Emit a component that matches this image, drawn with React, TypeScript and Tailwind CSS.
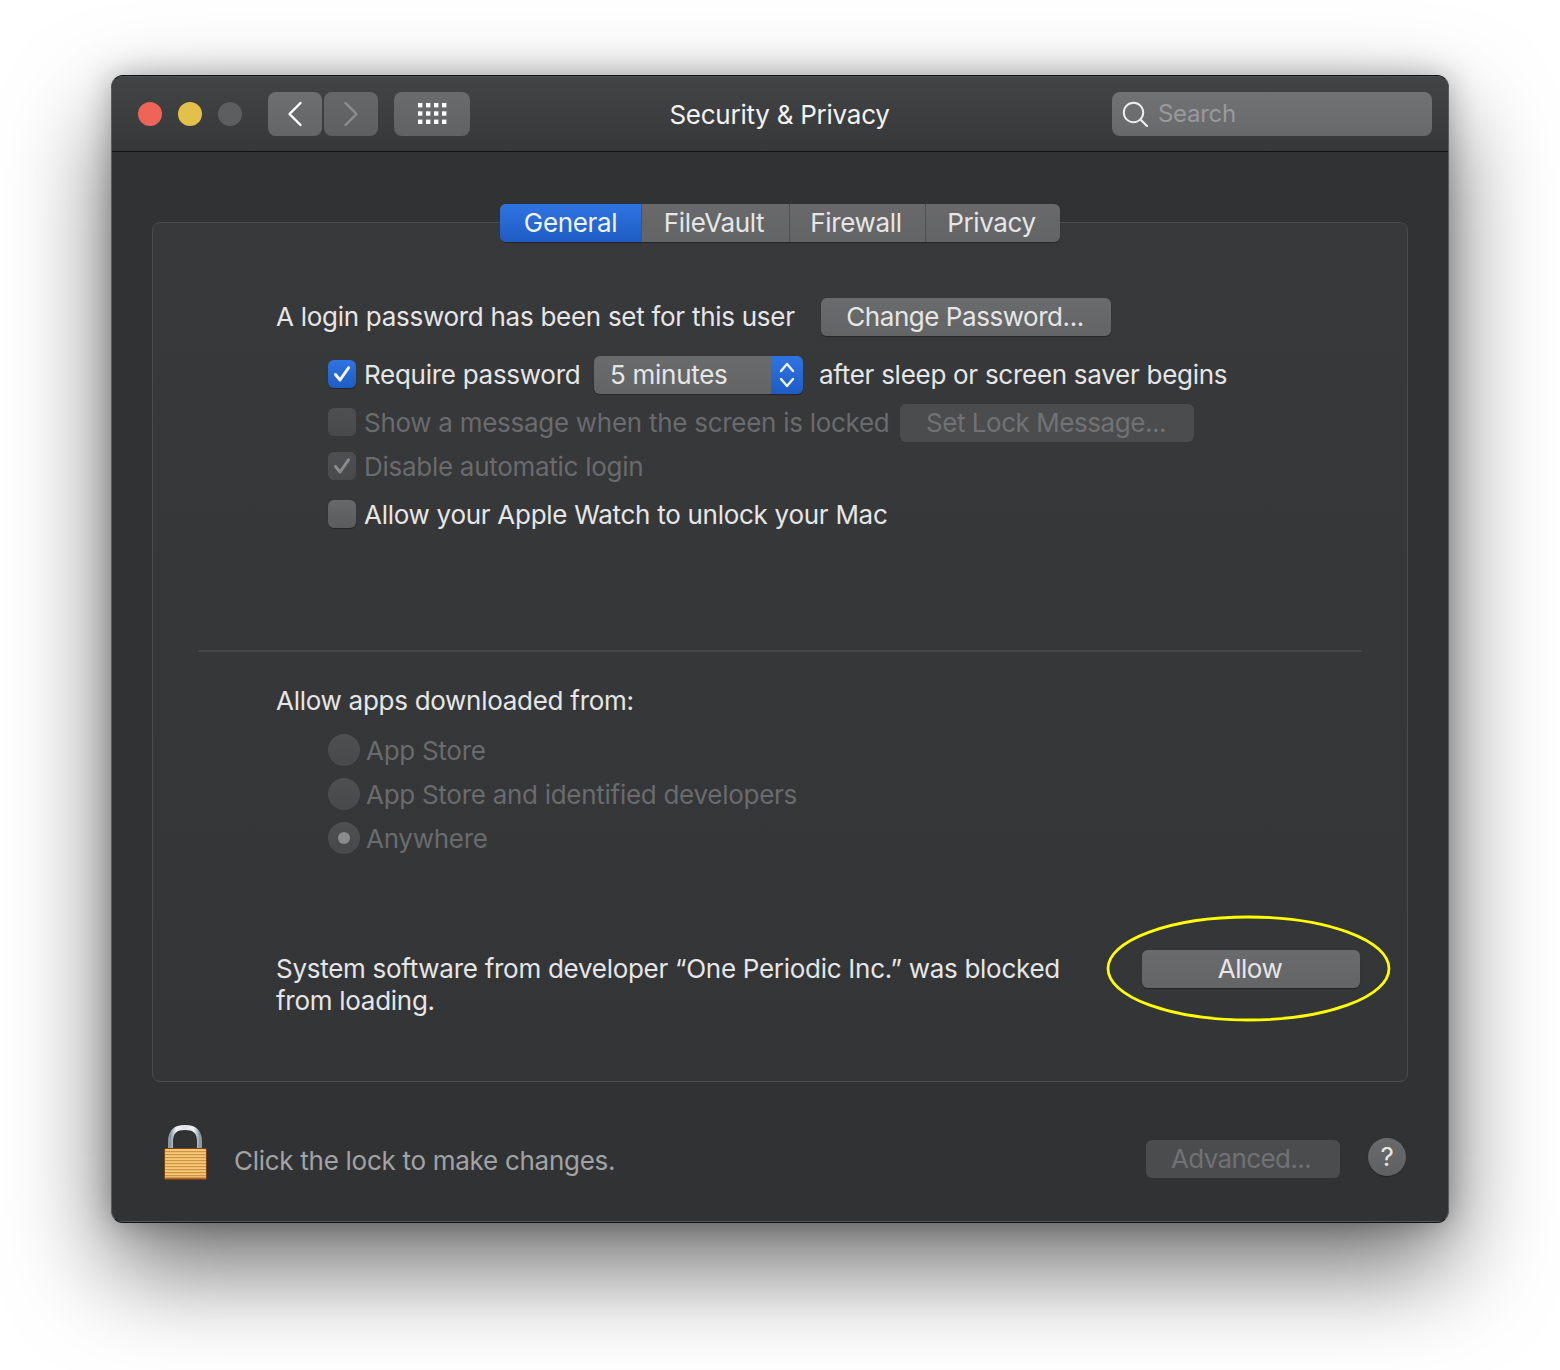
import React from "react";

const font = { fontFamily: "Inter, 'Liberation Sans', sans-serif" };

function Check({ dim }: { dim?: boolean }) {
  return (
    <svg width="20" height="20" viewBox="0 0 20 20" fill="none">
      <path d="M3.5 10.5 L8 16 L16.5 3.8" stroke={dim ? "#8a8b8c" : "#f2f4f8"} strokeWidth="3" strokeLinecap="round" strokeLinejoin="round" />
    </svg>
  );
}

function Box({ kind }: { kind: "on" | "off" | "dim" | "dimcheck" }) {
  const cls =
    kind === "on"
      ? "bg-gradient-to-b from-[#2f74e3] to-[#1f5cc4] shadow-[0_1px_1px_rgba(0,0,0,0.35)]"
      : kind === "off"
        ? "bg-gradient-to-b from-[#67686a] to-[#5a5b5d] shadow-[0_1px_1px_rgba(0,0,0,0.35)]"
        : "bg-gradient-to-b from-[#4e4f51] to-[#484a4c]";
  return (
    <span className={`flex items-center justify-center w-[28px] h-[28px] mb-[2px] rounded-[6px] shrink-0 ${cls}`}>
      {kind === "on" && <Check />}
      {kind === "dimcheck" && <Check dim />}
    </span>
  );
}

function Btn({ w, children, dim, track = "tracking-[-0.45px]", pad = "" }: { w: string; children: React.ReactNode; dim?: boolean; track?: string; pad?: string }) {
  return (
    <div
      className={`${w} ${track} ${pad} h-[38px] flex items-center justify-center rounded-[6px] shrink-0 ${
        dim
          ? "bg-[#4b4c4e] text-[#717274]"
          : "bg-gradient-to-b from-[#6a6b6d] to-[#636466] text-[#e6e6e7] shadow-[0_1px_1px_rgba(0,0,0,0.35)]"
      }`}
    >
      {children}
    </div>
  );
}

function Radio({ dot }: { dot?: boolean }) {
  return (
    <span className="flex items-center justify-center w-[32px] h-[32px] mb-[2px] rounded-full shrink-0 bg-gradient-to-b from-[#4e4f51] to-[#48494b]">
      {dot && <span className="w-[12px] h-[12px] rounded-full bg-[#8a8b8c]" />}
    </span>
  );
}

function Lock() {
  return (
    <svg width="44" height="56" viewBox="0 0 44 56" className="shrink-0">
      <defs>
        <linearGradient id="sh" x1="0" x2="1" y1="0" y2="0">
          <stop offset="0" stopColor="#8d98a3" />
          <stop offset="0.2" stopColor="#f2f5f8" />
          <stop offset="0.5" stopColor="#dfe3e7" />
          <stop offset="0.8" stopColor="#f2f5f8" />
          <stop offset="1" stopColor="#8d98a3" />
        </linearGradient>
      </defs>
      <path d="M6.5 24 V16.5 C6.5 6 12 2.5 21 2.5 C30 2.5 35.5 6 35.5 16.5 V24" fill="none" stroke="url(#sh)" strokeWidth="5" />
      <rect x="0.5" y="23.5" width="42" height="31" rx="1.5" fill="#f5c77a" stroke="#7d4214" strokeWidth="1" />
      {[26, 29, 32, 35, 38, 41, 44, 47, 50].map((y) => (
        <rect key={y} x="1" y={y} width="41" height="1.2" fill="#cf9440" />
      ))}
      <rect x="1" y="52.5" width="41" height="1.5" fill="#a9682a" />
    </svg>
  );
}

function Tab({ w, label, active }: { w: string; label: string; active?: boolean }) {
  return (
    <div
      className={`${w} h-full flex items-center justify-center tracking-[-0.35px] ${
        active
          ? "bg-gradient-to-b from-[#2f74e3] to-[#1f5cc4] text-[#f0f4fb] pl-[1px]"
          : "border-l border-[#505153] first:border-l-0 text-[#e6e6e7] pr-[2px]"
      }`}
    >
      {label}
    </div>
  );
}

export default function App() {
  return (
    <div style={font} className="w-[1560px] h-[1370px] bg-white pt-[75px] pl-[111px] text-[26px] tracking-[-0.28px] leading-[32px]">
      <div className="w-[1338px] h-[1148px] rounded-[12px] border border-x-[#5a5b5d] border-y-[#111112] bg-[#313234] overflow-hidden shadow-[0_44px_100px_0_rgba(0,0,0,0.58),0_0_30px_rgba(0,0,0,0.28)]">
        <div className="h-full border-b border-[#56575a]">
          <div className="relative h-[75px] flex items-center bg-gradient-to-b from-[#434446] to-[#37383a] shadow-[inset_0_1px_0_#505153] border-b border-[#111112] box-content pl-[26px] pr-[16px]">
            <span className="w-[24px] h-[24px] rounded-full bg-[#ee6459]" />
            <span className="w-[24px] h-[24px] rounded-full bg-[#e2c04a] ml-[16px]" />
            <span className="w-[24px] h-[24px] rounded-full bg-[#5d5e60] ml-[16px]" />
            <div className="w-[54px] h-[44px] ml-[26px] rounded-[8px] bg-gradient-to-b from-[#6e6f71] to-[#646567] flex items-center justify-center">
              <svg width="18" height="26" viewBox="0 0 18 26" fill="none">
                <path d="M14.5 2 L3.5 13 L14.5 24" stroke="#ffffff" strokeWidth="2.4" strokeLinecap="round" strokeLinejoin="round" />
              </svg>
            </div>
            <div className="w-[54px] h-[44px] ml-[2px] rounded-[8px] bg-gradient-to-b from-[#666769] to-[#5e5f61] flex items-center justify-center">
              <svg width="18" height="26" viewBox="0 0 18 26" fill="none">
                <path d="M3.5 2 L14.5 13 L3.5 24" stroke="#8c8d8f" strokeWidth="2.4" strokeLinecap="round" strokeLinejoin="round" />
              </svg>
            </div>
            <div className="w-[76px] h-[44px] ml-[16px] rounded-[8px] bg-gradient-to-b from-[#6a6b6d] to-[#616264] flex items-center justify-center">
              <svg width="29" height="21" viewBox="0 0 29 21" fill="#ffffff">
                {[0, 8.3, 16.6].map((y) =>
                  [0, 8, 16, 24].map((x) => <rect key={`${x}-${y}`} x={x} y={y} width="4.4" height="4.4" />)
                )}
              </svg>
            </div>
            <div className="absolute inset-x-0 top-[1px] h-[75px] flex items-center justify-center text-[#f2f2f3] pointer-events-none -ml-[1px] tracking-[-0.25px]">
              Security &amp; Privacy
            </div>
            <div className="ml-auto w-[320px] h-[44px] rounded-[8px] bg-gradient-to-b from-[#717274] to-[#68696b] flex items-center pl-[10px]">
              <svg width="26" height="26" viewBox="0 0 26 26" fill="none">
                <circle cx="11.5" cy="11.5" r="9.7" stroke="#eeeeee" strokeWidth="2" />
                <path d="M18.5 18.5 L25 25" stroke="#eeeeee" strokeWidth="2.2" strokeLinecap="round" />
              </svg>
              <span className="ml-[10px] text-[24px] text-[#99999b]">Search</span>
            </div>
          </div>

          <div className="px-[40px] pt-[70px]">
            <div className="h-[860px] rounded-[8px] border border-[#4a4b4d] bg-gradient-to-b from-[#38393b] to-[#343537]">
              <div className="flex justify-center -mt-[19px] ml-[-1px]">
                <div className="flex h-[38px] w-[560px] rounded-[6px] overflow-hidden bg-gradient-to-b from-[#69696b] to-[#636466] shadow-[0_1px_1px_rgba(0,0,0,0.35)]">
                  <Tab w="w-[141px]" label="General" active />
                  <Tab w="w-[148px]" label="FileVault" />
                  <Tab w="w-[136px]" label="Firewall" />
                  <Tab w="w-[135px]" label="Privacy" />
                </div>
              </div>

              <div className="pt-[56px] pl-[123px] text-[#e6e6e7]">
                <div className="flex items-center h-[38px]">
                  <span className="w-[545px] shrink-0">A login password has been set for this user</span>
                  <Btn w="w-[290px]" pad="pr-[2px]">Change Password...</Btn>
                </div>

                <div className="flex items-center h-[38px] mt-[20px] pl-[52px]">
                  <Box kind="on" />
                  <span className="ml-[8px] w-[230px] shrink-0">Require password</span>
                  <div className="w-[209px] h-[38px] flex rounded-[6px] overflow-hidden shrink-0 shadow-[0_1px_1px_rgba(0,0,0,0.35)]">
                    <div className="flex-1 bg-gradient-to-b from-[#6a6b6d] to-[#636466] pl-[16px] flex items-center">5 minutes</div>
                    <div className="w-[32px] bg-gradient-to-b from-[#2f74e3] to-[#1f5cc4] flex items-center justify-center">
                      <svg width="18" height="30" viewBox="0 0 18 30" fill="none">
                        <path d="M3 11 L9 4 L15 11 M3 19 L9 26 L15 19" stroke="#ecf1fa" strokeWidth="2.4" strokeLinecap="round" strokeLinejoin="round" />
                      </svg>
                    </div>
                  </div>
                  <span className="ml-[16px] whitespace-nowrap">after sleep or screen saver begins</span>
                </div>

                <div className="flex items-center h-[38px] mt-[10px] pl-[52px] text-[#6a6b6d]">
                  <Box kind="dim" />
                  <span className="ml-[8px] w-[536px] shrink-0 whitespace-nowrap">Show a message when the screen is locked</span>
                  <Btn w="w-[294px]" dim pad="pr-[2px]">Set Lock Message...</Btn>
                </div>

                <div className="flex items-center h-[32px] mt-[9px] pl-[52px] text-[#6a6b6d]">
                  <Box kind="dimcheck" />
                  <span className="ml-[8px]">Disable automatic login</span>
                </div>

                <div className="flex items-center h-[32px] mt-[16px] pl-[52px]">
                  <Box kind="off" />
                  <span className="ml-[8px]">Allow your Apple Watch to unlock your Mac</span>
                </div>
              </div>

              <div className="h-[2px] bg-[#454648] ml-[45px] mr-[45px] mt-[119px]" />

              <div className="pl-[123px] pr-[47px] text-[#e6e6e7]">
                <div className="h-[32px] mt-[33px]">Allow apps downloaded from:</div>
                <div className="flex items-center h-[32px] mt-[18px] pl-[52px] text-[#6a6b6d]">
                  <Radio />
                  <span className="ml-[6px]">App Store</span>
                </div>
                <div className="flex items-center h-[32px] mt-[12px] pl-[52px] text-[#6a6b6d]">
                  <Radio />
                  <span className="ml-[6px]">App Store and identified developers</span>
                </div>
                <div className="flex items-center h-[32px] mt-[12px] pl-[52px] text-[#6a6b6d]">
                  <Radio dot />
                  <span className="ml-[6px]">Anywhere</span>
                </div>

                <div className="flex items-start justify-between mt-[95px]">
                  <div className="w-[800px] pt-[3px]">
                    System software from developer “One Periodic Inc.” was blocked from loading.
                  </div>
                  <div className="relative">
                    <Btn w="w-[218px]" track="tracking-[-0.5px]" pad="pr-[2px]">Allow</Btn>
                    <svg className="absolute left-[-36px] top-[-35px]" width="286" height="108" viewBox="0 0 286 108" fill="none">
                      <ellipse cx="142.5" cy="53.5" rx="140.5" ry="51.5" stroke="#ffff00" strokeWidth="2.8" />
                    </svg>
                  </div>
                </div>
              </div>
            </div>

            <div className="flex mt-[43px] h-[56px] pl-[12px] pr-[2px]">
              <Lock />
              <span className="ml-[26px] mt-[20px] text-[#a2a3a4]">Click the lock to make changes.</span>
              <div className="ml-auto flex mt-[15px]">
                <Btn w="w-[194px]" dim track="tracking-[-0.6px]" pad="pr-[4px]">Advanced...</Btn>
                <div className="w-[38px] h-[38px] ml-[28px] -mt-[2px] rounded-full bg-gradient-to-b from-[#686a6c] to-[#5f6062] shadow-[0_1px_1px_rgba(0,0,0,0.35)] flex items-center justify-center text-[#e6e6e7]">?</div>
              </div>
            </div>
          </div>
        </div>
      </div>
    </div>
  );
}
